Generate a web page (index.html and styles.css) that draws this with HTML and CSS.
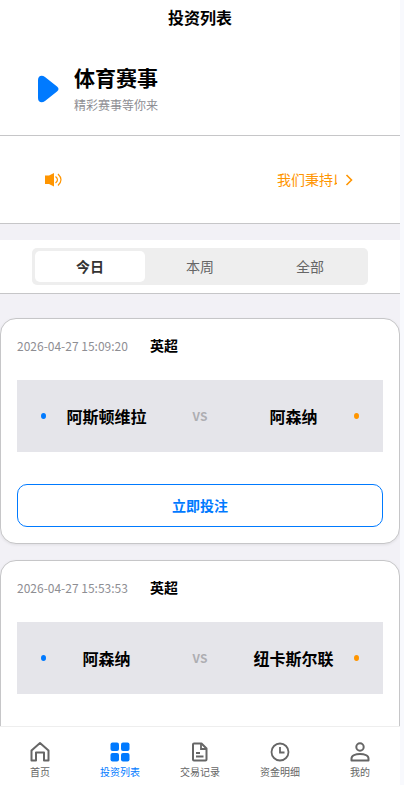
FILE: index.html
```html
<!DOCTYPE html>
<html lang="zh-CN">
<head>
<meta charset="utf-8">
<meta name="viewport" content="width=device-width, initial-scale=1">
<title>投资列表</title>
<link rel="stylesheet" href="styles.css">
</head>
<body>
<div class="app">
  <main class="content">
    <header class="topbar"><h1 class="topbar-title">投资列表</h1></header>

    <section class="hero">
      <svg class="hero-icon" viewBox="0 0 22 28" aria-hidden="true"><path d="M1 5C1 0.500 5 -0.500 8 2L20 11.500Q23 14 20 16.500L8 26C5 28.500 1 27.500 1 23Z" fill="#007aff"/></svg>
      <div>
        <h2 class="hero-title">体育赛事</h2>
        <p class="hero-sub">精彩赛事等你来</p>
      </div>
    </section>

    <a class="notice" href="#notice">
      <svg class="notice-speaker" viewBox="0 0 18 16" aria-hidden="true"><path d="M0 3.500h4L9 1v13.500l-5-2.500H0z" fill="#ff9500"/><path d="M10.500 4.500q4 3.300 0 6.500M13 2q6 5.800 0 11.500" fill="none" stroke="#ff9500" stroke-width="1.200"/></svg>
      <span class="notice-track"><span class="notice-text">我们秉持以</span></span>
      <svg class="notice-arrow" viewBox="0 0 8 14" aria-hidden="true"><path d="M1.500 2L6.500 7L1.500 12" fill="none" stroke="#ff9500" stroke-width="1.600"/></svg>
    </a>

    <nav class="filter">
      <div class="segments">
        <button class="segment segment-active" type="button">今日</button>
        <button class="segment" type="button">本周</button>
        <button class="segment" type="button">全部</button>
      </div>
    </nav>

    <section class="cards">
      <article class="card">
        <div class="card-head"><time class="card-time">2026-04-27 15:09:20</time><h3 class="league">英超</h3></div>
        <div class="match">
          <i class="dot dot-home"></i><span class="team">阿斯顿维拉</span><span class="versus">VS</span><span class="team">阿森纳</span><i class="dot dot-away"></i>
        </div>
        <button class="bet" type="button">立即投注</button>
      </article>
      <article class="card">
        <div class="card-head"><time class="card-time">2026-04-27 15:53:53</time><h3 class="league">英超</h3></div>
        <div class="match">
          <i class="dot dot-home"></i><span class="team">阿森纳</span><span class="versus">VS</span><span class="team">纽卡斯尔联</span><i class="dot dot-away"></i>
        </div>
        <button class="bet" type="button">立即投注</button>
      </article>
    </section>
  </main>

  <nav class="tabbar">
    <a class="tab" href="#home">
      <svg class="tab-icon" viewBox="0 0 22 22" aria-hidden="true"><path d="M2.500 19.500V9.500L11 2l8.500 7.500v10H15v-8H7v8z" fill="none" stroke="#666" stroke-width="2" stroke-linejoin="round"/></svg>
      <span>首页</span>
    </a>
    <a class="tab tab-active" href="#list">
      <svg class="tab-icon" viewBox="0 0 22 22" aria-hidden="true"><g fill="#007aff"><rect x="1.500" y="1.500" width="8.500" height="8.500" rx="2"/><rect x="12" y="1.500" width="8.500" height="8.500" rx="2"/><rect x="1.500" y="12" width="8.500" height="8.500" rx="2"/><rect x="12" y="12" width="8.500" height="8.500" rx="2"/></g></svg>
      <span>投资列表</span>
    </a>
    <a class="tab" href="#records">
      <svg class="tab-icon" viewBox="0 0 22 22" aria-hidden="true"><path d="M5 2.500h7.500l5 5v11q0 1-1 1H5q-1 0-1-1v-15q0-1 1-1z" fill="none" stroke="#666" stroke-width="2" stroke-linejoin="round"/><path d="M12 2v6h5.500M7 12h4M7 15.500h7.500" fill="none" stroke="#666" stroke-width="1.800"/></svg>
      <span>交易记录</span>
    </a>
    <a class="tab" href="#funds">
      <svg class="tab-icon" viewBox="0 0 22 22" aria-hidden="true"><circle cx="11" cy="11" r="8.500" fill="none" stroke="#666" stroke-width="1.800"/><path d="M11 6v5.500h4.500" fill="none" stroke="#666" stroke-width="1.800"/></svg>
      <span>资金明细</span>
    </a>
    <a class="tab" href="#me">
      <svg class="tab-icon" viewBox="0 0 22 22" aria-hidden="true"><circle cx="11" cy="6" r="3.700" fill="none" stroke="#666" stroke-width="2"/><path d="M2.500 19.500v-2c0-6 17-6 17 0v2z" fill="none" stroke="#666" stroke-width="2" stroke-linejoin="round"/></svg>
      <span>我的</span>
    </a>
  </nav>
</div>
</body>
</html>
```
FILE: styles.css
```css
* { box-sizing: border-box; }

body {
  margin: 0;
  padding-right: 4px;
  background: #f8f9fd;
  color: #000;
  font-family: "Noto Sans CJK SC", sans-serif;
}

h1, h2, h3, p { margin: 0; }
button { font-family: inherit; cursor: pointer; }
a { text-decoration: none; }
svg { display: block; flex: none; }

.app {
  display: flex;
  flex-direction: column;
  height: 100vh;
  background: #f2f1f6;
}

.content {
  flex: 1;
  min-height: 0;
  overflow: hidden;
}

.topbar {
  padding: 5px 16px 7px;
  background: #fff;
  text-align: center;
}
.topbar-title { font-size: 16px; line-height: 24px; }

.hero {
  display: flex;
  align-items: center;
  gap: 15px;
  padding: 25px 37px 19px;
  background: #fff;
  border-bottom: 1px solid #c6c6c8;
}
.hero-icon { width: 22px; height: 28px; }
.hero-title { font-size: 21px; line-height: 32px; }
.hero-sub {
  margin-top: 1px;
  color: #8e8e93;
  font-size: 12px;
  line-height: 22px;
}

.notice {
  display: flex;
  align-items: center;
  padding: 32px 47px 32px 45px;
  background: #fff;
  border-bottom: 1px solid #c6c6c8;
  color: #ff9500;
  font-size: 14px;
  line-height: 23px;
}
.notice-speaker { width: 18px; height: 16px; }
.notice-track {
  display: flex;
  justify-content: flex-end;
  flex: 1;
  margin-right: 8px;
}
.notice-text {
  width: 60px;
  overflow: hidden;
  white-space: nowrap;
}
.notice-arrow { width: 8px; height: 14px; }

.filter {
  margin-top: 16px;
  padding: 8px 32px;
  background: #fff;
  border-bottom: 1px solid #c6c6c8;
}
.segments {
  display: flex;
  padding: 3px;
  border-radius: 5px;
  background: #eee;
}
.segment {
  flex: 1;
  padding: 0;
  border: 0;
  border-radius: 5px;
  background: transparent;
  color: #666;
  font-size: 14px;
  line-height: 31px;
}
.segment-active {
  background: #fff;
  color: #333;
  font-weight: 700;
}

.cards {
  display: flex;
  flex-direction: column;
  gap: 16px;
  padding-top: 24px;
}
.card {
  padding: 16px;
  border: 1px solid #c6c6c8;
  border-radius: 16px;
  background: #fff;
  box-shadow: 0 1px 3px rgba(0, 0, 0, 0.08);
}
.card-head {
  display: flex;
  align-items: center;
  line-height: 21px;
}
.card-time {
  min-width: 133px;
  color: #8e8e93;
  font-size: 12px;
}
.league { font-size: 14px; }

.match {
  display: flex;
  align-items: center;
  margin: 24px 0 32px;
  padding: 24px;
  background: #e5e5ea;
  line-height: 24px;
}
.dot {
  width: 5px;
  height: 6px;
  border-radius: 50%;
}
.dot-home { background: #007aff; }
.dot-away { background: #ff9500; }
.team {
  flex: 1;
  font-size: 16px;
  font-weight: 700;
  text-align: center;
}
.versus {
  width: 66px;
  color: #aeaeb2;
  font-size: 12px;
  font-weight: 700;
  text-align: center;
}

.bet {
  display: block;
  width: 100%;
  padding: 10px;
  border: 1px solid #007aff;
  border-radius: 10px;
  background: #fff;
  color: #007aff;
  font-size: 14px;
  font-weight: 700;
  line-height: 21px;
}

.tabbar {
  display: flex;
  flex: none;
  padding: 14px 0 6px;
  background: #fff;
  border-top: 1px solid #eee;
}
.tab {
  display: flex;
  flex: 1;
  flex-direction: column;
  align-items: center;
  gap: 1px;
  color: #666;
  font-size: 10px;
  line-height: 15px;
}
.tab-active { color: #007aff; }
.tab-icon { width: 22px; height: 22px; }
```
